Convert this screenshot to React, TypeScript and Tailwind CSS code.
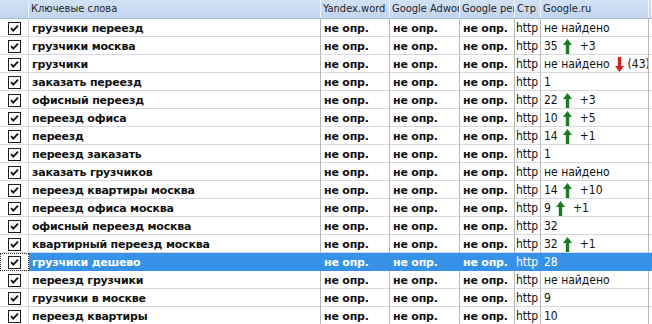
import * as React from "react";

type Trend = { dir: "up" | "down"; label: string };

interface Row {
    keyword: string;
    pos: string;
    trend?: Trend;
}

const rows: Row[] = [
    { keyword: "грузчики переезд", pos: "не найдено" },
    { keyword: "грузчики москва", pos: "35", trend: { dir: "up", label: "+3" } },
    { keyword: "грузчики", pos: "не найдено", trend: { dir: "down", label: "(43)" } },
    { keyword: "заказать переезд", pos: "1" },
    { keyword: "офисный переезд", pos: "22", trend: { dir: "up", label: "+3" } },
    { keyword: "переезд офиса", pos: "10", trend: { dir: "up", label: "+5" } },
    { keyword: "переезд", pos: "14", trend: { dir: "up", label: "+1" } },
    { keyword: "переезд заказать", pos: "1" },
    { keyword: "заказать грузчиков", pos: "не найдено" },
    { keyword: "переезд квартиры москва", pos: "14", trend: { dir: "up", label: "+10" } },
    { keyword: "переезд офиса москва", pos: "9", trend: { dir: "up", label: "+1" } },
    { keyword: "офисный переезд москва", pos: "32" },
    { keyword: "квартирный переезд москва", pos: "32", trend: { dir: "up", label: "+1" } },
    { keyword: "грузчики дешево", pos: "28" },
    { keyword: "переезд грузчики", pos: "не найдено" },
    { keyword: "грузчики в москве", pos: "9" },
    { keyword: "переезд квартиры", pos: "10" },
];

const SELECTED = 13;

const cols = "grid-cols-[29px_292px_69px_70px_55px_26px_108px_3px]";

function CheckBox() {
    return (
        <svg width="13" height="13" viewBox="0 0 13 13">
            <rect x="0.5" y="0.5" width="12" height="12" fill="#fff" stroke="#1c1c1c" />
            <path d="M3 6.2 L5.3 8.6 L10 3.6" fill="none" stroke="#111" strokeWidth="1.8" />
        </svg>
    );
}

function Arrow({ dir }: { dir: "up" | "down" }) {
    if (dir === "up") {
        return (
            <svg width="9" height="15" viewBox="0 0 9 15" className="shrink-0 ml-[5px] mr-[8px]">
                <path d="M4.5 0 L9 6 L6.2 6 L6.2 15 L2.8 15 L2.8 6 L0 6 Z" fill="#1b7a1f" />
            </svg>
        );
    }
    return (
        <svg width="9" height="15" viewBox="0 0 9 15" className="shrink-0 ml-[5px] mr-[4px]">
            <path d="M4.5 15 L9 9 L6.2 9 L6.2 0 L2.8 0 L2.8 9 L0 9 Z" fill="#d42020" />
        </svg>
    );
}

export default function App() {
    return (
        <div className="w-[652px] h-[324px] overflow-hidden bg-white text-[11px] text-[#111] font-['DejaVu_Sans_Condensed','DejaVu_Sans',sans-serif]">
            <div className={`grid ${cols} h-[19px] bg-gradient-to-b from-[#d2e2f5] to-[#c2d5ee] border-b border-[#a9bfd9] text-[#1f1f1f]`}>
                {["", "Ключевые слова", "Yandex.word", "Google Adwords", "Google рейтинг", "Стр", "Google.ru", ""].map((h, i) => (
                    <div key={i} className="border-r border-[#eef4fb] pl-[2px] leading-[18px] overflow-hidden whitespace-nowrap">
                        {h}
                    </div>
                ))}
            </div>
            {rows.map((r, i) => {
                const sel = i === SELECTED;
                const cell = sel
                    ? "bg-[#3592e8] text-white border-r border-[#3592e8]"
                    : "border-r border-[#b8b8b8]";
                const bold = "pl-[3px] pt-[1px] font-bold leading-[17px] whitespace-nowrap font-['DejaVu_Sans',sans-serif] tracking-[-0.2px]";
                return (
                    <div key={i} className={`grid ${cols} h-[18px] border-b border-[#d6d9df]`}>
                        <div
                            className={`flex items-center justify-center ${
                                sel ? "border border-dotted border-[#333]" : "border-r border-[#d6d9df]"
                            }`}
                        >
                            <CheckBox />
                        </div>
                        <div className={`${cell} ${bold}`}>{r.keyword}</div>
                        <div className={`${cell} ${bold}`}>не опр.</div>
                        <div className={`${cell} ${bold}`}>не опр.</div>
                        <div className={`${cell} ${bold}`}>не опр.</div>
                        <div className={`${cell} pl-[1px] pt-[1px] text-[12px] leading-[17px] whitespace-nowrap overflow-hidden`}>http</div>
                        <div className={`${cell} pl-[3px] text-[12px] flex items-center whitespace-nowrap overflow-hidden`}>
                            <span>{r.pos}</span>
                            {r.trend && (
                                <>
                                    <Arrow dir={r.trend.dir} />
                                    <span>{r.trend.label}</span>
                                </>
                            )}
                        </div>
                        <div className={sel ? "bg-[#3592e8]" : ""} />
                    </div>
                );
            })}
        </div>
    );
}
